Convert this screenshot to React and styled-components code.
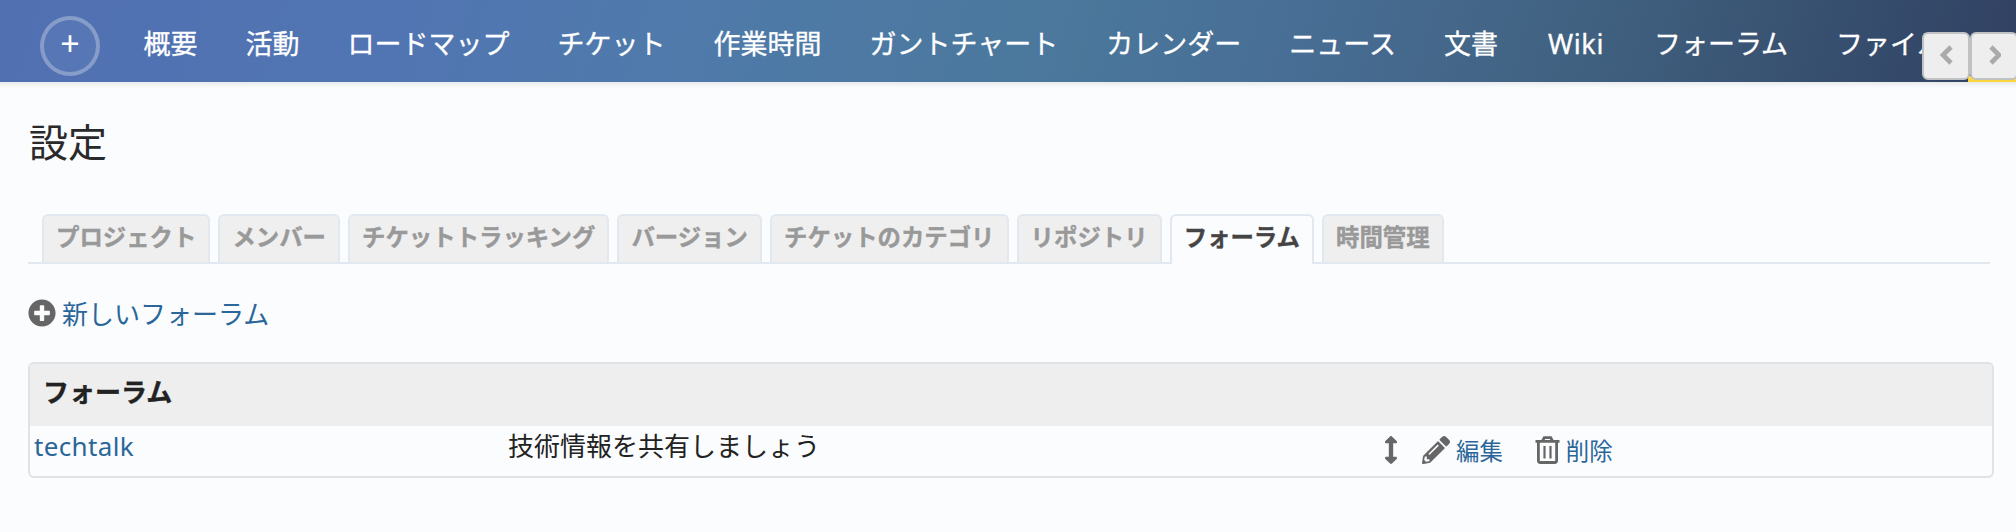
import React from "react";
import styled, { createGlobalStyle } from "styled-components";
import { FaPlusCircle, FaArrowsAltV, FaPencilAlt } from "react-icons/fa";

const Global = createGlobalStyle`
  * { box-sizing: border-box; }
  body {
    margin: 0;
    background: #fbfcfe;
    color: #222;
    font-family: "Noto Sans", "Noto Sans CJK JP", sans-serif;
    font-size: 26px;
  }
  a { color: inherit; text-decoration: none; }
`;

const Page = styled.div`
  width: 2016px;
  height: 532px;
  overflow: hidden;
`;

const Header = styled.header`
  position: relative;
  display: flex;
  align-items: flex-start;
  height: 82px;
  overflow: hidden;
  padding-left: 40px;
  color: #fff;
  background: linear-gradient(106deg, #5170b2 0%, #5175b2 20%, #4f7aab 33%, #4b789c 52%, #486e95 64%, #40607f 79%, #354b6b 93%, #324263 99%);
`;

const HeaderShadow = styled.div`
  height: 6px;
  background: linear-gradient(#e8ebed, #fbfcfe);
`;

const AddButton = styled.a`
  display: flex;
  flex: none;
  justify-content: center;
  width: 60px;
  height: 60px;
  margin-top: 16px;
  border: 4px solid rgba(255, 255, 255, 0.28);
  border-radius: 50%;
  background: rgba(255, 255, 255, 0.04);
  font-size: 34px;
  font-weight: 400;
  line-height: 46px;
`;

const Nav = styled.nav`
  display: flex;
  gap: 48px;
  margin-left: 43.5px;
`;

const NavItem = styled.a`
  flex: none;
  width: ${(p) => p.$width || "auto"};
  padding-left: ${(p) => (p.$width ? "2px" : 0)};
  letter-spacing: ${(p) => (p.$width ? "0.7px" : 0)};
  font-size: 27px;
  font-weight: 400;
  line-height: 88px;
  white-space: nowrap;
  -webkit-text-stroke: 0.3px;
`;

const Scroller = styled.div`
  position: absolute;
  top: 32px;
  right: -2px;
  display: flex;
`;

const ScrollButton = styled.button`
  display: flex;
  align-items: center;
  justify-content: center;
  width: 48px;
  height: 48px;
  padding: 0 0 2px;
  border: 2px solid #bfc1c3;
  border-radius: 6px;
  background: #eee;
`;

const Underline = styled.div`
  position: absolute;
  right: 0;
  bottom: 0;
  width: 48px;
  height: 6px;
  background: #fdd63e;
`;

const Content = styled.main`
  padding: 0 22px 0 28px;
`;

const Title = styled.h2`
  margin: 0;
  padding: 23px 0 0 1px;
  height: 126px;
  color: #2a2a2a;
  font-size: 39px;
  font-weight: 400;
  line-height: 62px;
`;

const Tabs = styled.div`
  display: flex;
  gap: 8.1px;
  height: 50px;
  margin-right: 4px;
  padding-left: 14px;
  background: linear-gradient(#e1e8ef, #e1e8ef) bottom / 100% 2px no-repeat;
`;

const Tab = styled.a`
  height: ${(p) => (p.$active ? "50px" : "48px")};
  padding: 0 12px;
  border: 2px solid #e1e8ef;
  border-bottom: 0;
  border-radius: 6px 6px 0 0;
  background: ${(p) => (p.$active ? "#fbfcfe" : "#efefef")};
  color: ${(p) => (p.$active ? "#444" : "#999")};
  font-size: 23.4px;
  font-weight: 700;
  line-height: 43px;
  white-space: nowrap;
  -webkit-text-stroke: 0.4px;
`;

const NewForum = styled.a`
  display: flex;
  align-items: center;
  gap: 6px;
  height: 98px;
  color: #2a6699;
  svg { color: #666; }
`;

const Panel = styled.section`
  height: 116px;
  border: 2px solid #e1e2e4;
  border-radius: 6px;
  overflow: hidden;
`;

const PanelHead = styled.div`
  height: 62px;
  padding-left: 13px;
  background: #eee;
  font-weight: 700;
  line-height: 57px;
  -webkit-text-stroke: 0.4px;
`;

const Row = styled.div`
  display: grid;
  grid-template-columns: 474px 869px auto;
  height: 50px;
  padding-left: 4px;
  line-height: 40px;
`;

const ForumLink = styled.a`
  color: #2a6699;
  letter-spacing: 0.35px;
`;

const Actions = styled.div`
  display: flex;
  align-items: center;
  height: 47px;
  color: #666;
`;

const Action = styled.a`
  display: flex;
  align-items: center;
  gap: 6px;
  margin-left: ${(p) => p.$gap};
  font-size: 23.4px;
  span { color: #2a6699; padding-top: 2px; }
`;

const navItems = ["概要", "活動", "ロードマップ", "チケット", "作業時間", "ガントチャート", "カレンダー", "ニュース", "文書", "Wiki", "フォーラム", "ファイル"];
const tabs = ["プロジェクト", "メンバー", "チケットトラッキング", "バージョン", "チケットのカテゴリ", "リポジトリ", "フォーラム", "時間管理"];

const Chevron = ({ d }) => (
  <svg width="14" height="20" viewBox="0 0 14 20" fill="none" stroke="#aaa" strokeWidth="4.6">
    <path d={d} />
  </svg>
);

const TrashIcon = () => (
  <svg width="25" height="28" viewBox="0 0 25 28" fill="none" stroke="#666" strokeWidth="2.8">
    <path d="M0.5 5.3H24.5M7.5 5L9.3 1.6H15.7L17.5 5M3.4 5V24.5Q3.4 26.5 5.4 26.5H19.6Q21.6 26.5 21.6 24.5V5" />
    <path d="M9.5 10V22.5M15.5 10V22.5" strokeWidth="2.2" />
  </svg>
);

export default function App() {
  return (
    <Page>
      <Global />
      <Header>
        <AddButton>+</AddButton>
        <Nav>
          {navItems.map((t) => (
            <NavItem key={t} $width={t === "Wiki" ? "60px" : undefined}>{t}</NavItem>
          ))}
        </Nav>
        <Underline />
        <Scroller>
          <ScrollButton><Chevron d="M12 2L4 10L12 18" /></ScrollButton>
          <ScrollButton><Chevron d="M4 2L12 10L4 18" /></ScrollButton>
        </Scroller>
      </Header>
      <HeaderShadow />
      <Content>
        <Title>設定</Title>
        <Tabs>
          {tabs.map((t) => (
            <Tab key={t} $active={t === "フォーラム"}>{t}</Tab>
          ))}
        </Tabs>
        <NewForum>
          <FaPlusCircle size={28} />
          新しいフォーラム
        </NewForum>
        <Panel>
          <PanelHead>フォーラム</PanelHead>
          <Row>
            <ForumLink>techtalk</ForumLink>
            <span>技術情報を共有しましょう</span>
            <Actions>
              <FaArrowsAltV size={28} />
              <Action $gap="17px"><FaPencilAlt size={28} /><span>編集</span></Action>
              <Action $gap="32px"><TrashIcon /><span>削除</span></Action>
            </Actions>
          </Row>
        </Panel>
      </Content>
    </Page>
  );
}
